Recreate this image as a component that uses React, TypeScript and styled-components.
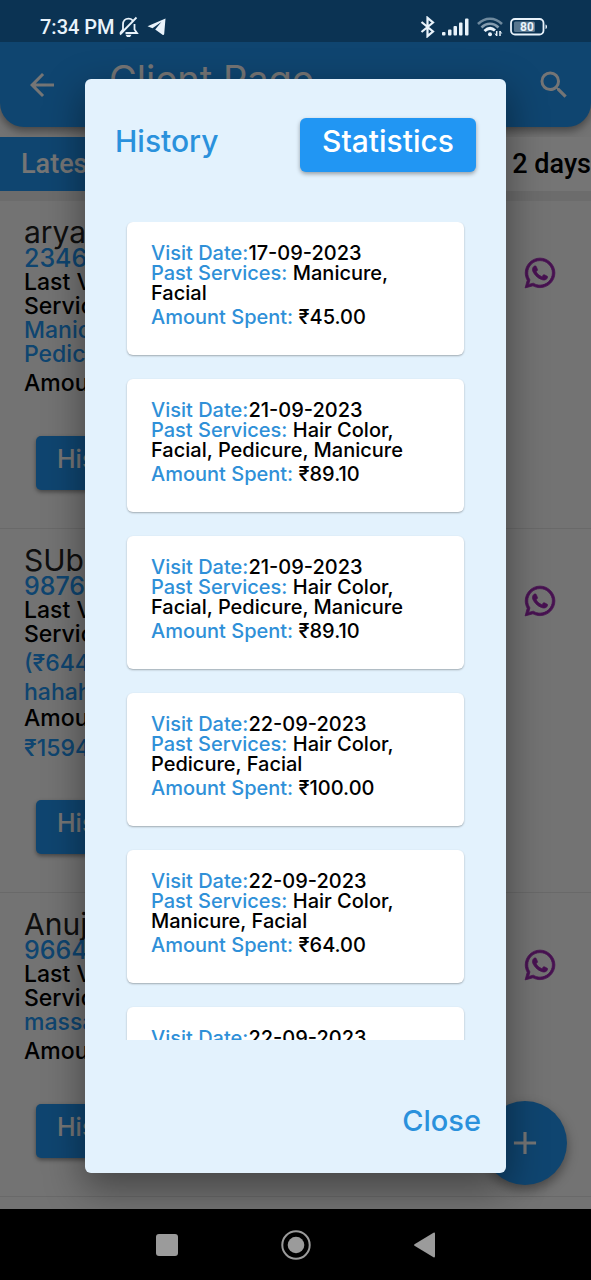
import React from "react";
import styled, { createGlobalStyle } from "styled-components";
import { FaWhatsapp } from "react-icons/fa";
import { MdAdd, MdArrowBack, MdSearch } from "react-icons/md";

const GlobalStyle = createGlobalStyle`
  * { box-sizing: border-box; }
  body { margin: 0; background: #000; }
  button { border: 0; background: none; padding: 0; font: inherit; color: inherit; cursor: pointer; }
  p, h1, h2, ul { margin: 0; padding: 0; font-weight: inherit; font-size: inherit; }
`;

const brand = "#2196f3";

const Screen = styled.div`
  display: flex;
  flex-direction: column;
  height: 100vh;
  font-family: Inter, "Noto Sans", sans-serif;
  font-weight: 500;
  color: #000;
`;

const Page = styled.div`
  position: relative;
  flex: 1;
  min-height: 0;
  overflow: hidden;
  background: #fafafa;
`;

const StatusBar = styled.div`
  position: absolute;
  inset: 0 0 auto 0;
  z-index: 3;
  display: flex;
  align-items: center;
  justify-content: space-between;
  height: 42px;
  padding: 12px 43px 0 40px;
  background: rgba(0, 0, 0, 0.26);
  color: #e9f3fb;
  font: 500 20px/28px Roboto, sans-serif;
`;

const StatusGroup = styled.div<{ $gap: number }>`
  display: flex;
  align-items: center;
  gap: ${(p) => p.$gap}px;
`;

const AppBar = styled.header`
  display: flex;
  align-items: center;
  gap: 49px;
  height: 127px;
  padding: 42px 19px 0 24px;
  border-radius: 0 0 24px 24px;
  background: ${brand};
  color: #fff;
  box-shadow: 0 4px 8px rgba(0, 0, 0, 0.4);
`;

const Title = styled.h1`
  flex: 1;
  padding-bottom: 12px;
  font-size: 38px;
  font-weight: 400;
  line-height: 44px;
`;

const IconButton = styled.button`
  display: flex;
  font-size: 36px;
`;

const Tabs = styled.nav`
  display: flex;
  justify-content: space-between;
  margin-top: 10px;
  height: 54px;
  background: #fff;
  font-family: Roboto, sans-serif;
  font-size: 27px;
`;

const Tab = styled.button<{ $active?: boolean }>`
  padding: ${(p) => (p.$active ? "0 21px" : "0")};
  background: ${(p) => (p.$active ? brand : "transparent")};
  color: ${(p) => (p.$active ? "#fff" : "#000")};
`;

const Clients = styled.ul`
  list-style: none;
  border-top: 10px solid #ececec;
`;

const Client = styled.li`
  display: flex;
  justify-content: space-between;
  padding: 17px 34px 38px 24px;
  border-bottom: 1px solid #e4e4e4;
`;

const ClientName = styled.h2`
  font-size: 30px;
  font-weight: 400;
  line-height: 28px;
  color: #222;
`;

const Line = styled.p<{ $height?: number; $accent?: boolean; $size?: number }>`
  font-size: ${(p) => p.$size ?? 23}px;
  line-height: ${(p) => p.$height ?? 24}px;
  color: ${(p) => (p.$accent ? brand : "#000")};
`;

const HistoryButton = styled.button`
  margin: 36px 0 0 12px;
  height: 54px;
  padding: 0 21px 8px;
  border-radius: 5px;
  background: ${brand};
  color: #fff;
  font-size: 25px;
  box-shadow: 0 2px 4px rgba(0, 0, 0, 0.4);
`;

const ChatButton = styled.button`
  display: flex;
  align-self: flex-start;
  margin-top: 38px;
  font-size: 34px;
  color: #9c27b0;

  svg {
    stroke: currentColor;
    stroke-width: 12;
  }
`;

const Fab = styled.button`
  position: absolute;
  right: 24px;
  bottom: 24px;
  display: grid;
  place-items: center;
  width: 84px;
  height: 84px;
  border-radius: 50%;
  background: ${brand};
  color: #fff;
  font-size: 38px;
  box-shadow: 0 5px 12px rgba(0, 0, 0, 0.4);
`;

const Scrim = styled.div`
  position: absolute;
  inset: 0;
  z-index: 2;
  display: flex;
  padding: 79px 85px 36px;
  background: rgba(0, 0, 0, 0.54);
`;

const Dialog = styled.section`
  flex: 1;
  min-width: 0;
  display: flex;
  flex-direction: column;
  border-radius: 6px;
  background: #e3f2fd;
  box-shadow: 0 14px 38px 2px rgba(0, 0, 0, 0.4);
`;

const DialogTabs = styled.div`
  display: flex;
  justify-content: space-between;
  padding: 39px 30px 50px;
  font-size: 30px;
  line-height: 34px;
`;

const DialogTab = styled.button<{ $active?: boolean }>`
  height: 54px;
  padding: ${(p) => (p.$active ? "0 22px 8px" : "0 0 8px")};
  border-radius: 6px;
  background: ${(p) => (p.$active ? brand : "transparent")};
  color: ${(p) => (p.$active ? "#fff" : "#2a91dc")};
  box-shadow: ${(p) => (p.$active ? "0 2px 4px rgba(0, 0, 0, 0.35)" : "none")};
`;

const Visits = styled.ul`
  flex: 1;
  min-height: 0;
  display: flex;
  flex-direction: column;
  gap: 24px;
  padding: 0 42px;
  overflow-y: auto;
  scrollbar-width: none;
  list-style: none;
`;

const Visit = styled.li`
  flex: none;
  padding: 21px 24px 24px;
  border-radius: 6px;
  background: #fff;
  font-size: 20px;
  line-height: 20px;
  box-shadow: 0 1px 2px rgba(0, 0, 0, 0.3);
`;

const Amount = styled.p`
  line-height: 28px;
`;

const Label = styled.span`
  color: #2f90d8;
`;

const DialogFooter = styled.footer`
  display: flex;
  justify-content: flex-end;
  align-items: flex-start;
  height: 133px;
  padding: 64px 25px 0;
  color: #2a91dc;
  font-size: 29px;
  line-height: 34px;
`;

const NavBar = styled.nav`
  display: flex;
  justify-content: center;
  align-items: center;
  gap: 99px;
  height: 71px;
  background: #000;
  color: #9b9b9b;

  button { display: flex; }
`;

const visits = [
  ["17-09-2023", "Manicure, Facial", "45.00"],
  ["21-09-2023", "Hair Color, Facial, Pedicure, Manicure", "89.10"],
  ["21-09-2023", "Hair Color, Facial, Pedicure, Manicure", "89.10"],
  ["22-09-2023", "Hair Color, Pedicure, Facial", "100.00"],
  ["22-09-2023", "Hair Color, Manicure, Facial", "64.00"],
  ["22-09-2023", "Hair Color, Facial", "64.00"],
];

type Detail = { text: string; accent?: boolean; height?: number };

const clients: { name: string; phone: string; details: Detail[] }[] = [
  {
    name: "arya",
    phone: "2346",
    details: [
      { text: "Manicure,", accent: true },
      { text: "Pedicure", accent: true },
      { text: "Amount", height: 34 },
    ],
  },
  {
    name: "SUbh",
    phone: "9876",
    details: [
      { text: "(₹644)", accent: true, height: 34 },
      { text: "hahah", accent: true },
      { text: "Amount", height: 28 },
      { text: "₹1594", accent: true, height: 32 },
    ],
  },
  {
    name: "Anuj",
    phone: "9664",
    details: [
      { text: "massage", accent: true },
      { text: "Amount", height: 34 },
    ],
  },
];

const BellOff = () => (
  <svg width="20" height="22" viewBox="0 0 20 22" fill="none" stroke="currentColor" strokeWidth="1.800">
    <path d="M4 13.500V8.500C4 5 6.300 2.600 9.500 2.600 11.200 2.600 12.600 3.200 13.600 4.300M15.500 8V13.500L18 17H6.500M1 18.500 17.500 1.500M4 13.500 1.200 17" />
    <path d="M6.500 18.800H12.500L11 21H8Z" fill="currentColor" stroke="none" />
  </svg>
);

const PaperPlane = () => (
  <svg width="19" height="18" viewBox="0 0 19 18" fill="currentColor">
    <path d="M18.500 0.500 0.500 8.200 5.500 10.300 14.300 4 8.200 11.600 15.500 16.800C16.300 17.300 17 17 17.200 16Z" />
  </svg>
);

const Bluetooth = () => (
  <svg width="15" height="22" viewBox="0 0 15 22" fill="none" stroke="currentColor" strokeWidth="2.200">
    <path d="M1.500 6 13 15.500 7.500 20.200V1.800L13 6.500 1.500 16" />
  </svg>
);

const Signal = () => (
  <svg width="28" height="18" viewBox="0 0 28 18" fill="currentColor">
    <rect x="0" y="14" width="3.500" height="3.500" rx="1" />
    <rect x="6" y="11.500" width="3.500" height="6" rx="1" />
    <rect x="11.500" y="8" width="3.500" height="9.500" rx="1" />
    <rect x="17" y="4.500" width="3.500" height="13" rx="1" />
    <rect x="23" y="0.500" width="3.500" height="17" rx="1" />
  </svg>
);

const Wifi = () => (
  <svg width="26" height="20" viewBox="0 0 26 20" fill="none" stroke="currentColor" strokeWidth="2.600">
    <path d="M1 7C8 0 18 0 25 7" opacity="0.45" />
    <path d="M4.500 10.500C9.500 5.500 16.500 5.500 21.500 10.500" opacity="0.55" />
    <path d="M7.500 14C11 10.800 15 10.800 18 13.500" strokeWidth="3" />
    <circle cx="13" cy="17.200" r="2" fill="currentColor" stroke="none" />
    <path d="M19.700 14V19M23 14V19" strokeWidth="1.500" />
    <path d="M18 16.500 19.700 19M24.700 16.500 23 14" strokeWidth="1" />
  </svg>
);

const Battery = () => (
  <svg width="38" height="18" viewBox="0 0 38 18" fill="none">
    <rect x="1" y="1" width="32.500" height="15.500" rx="4" stroke="currentColor" strokeWidth="1.800" />
    <rect x="4" y="3.500" width="21" height="10.500" rx="1.500" fill="currentColor" opacity="0.35" />
    <path d="M35.500 6.500C37.500 7 37.500 10.500 35.500 11Z" fill="currentColor" />
    <text x="17" y="13" fill="currentColor" textAnchor="middle" fontSize="12" fontWeight="700">80</text>
  </svg>
);

export default function App() {
  return (
    <Screen>
      <GlobalStyle />
      <Page>
        <StatusBar>
          <StatusGroup $gap={8}>
            <StatusGroup $gap={4}>
              <span>7:34 PM</span>
              <BellOff />
            </StatusGroup>
            <PaperPlane />
          </StatusGroup>
          <StatusGroup $gap={7}>
            <Bluetooth />
            <Signal />
            <Wifi />
            <Battery />
          </StatusGroup>
        </StatusBar>

        <AppBar>
          <IconButton aria-label="Back"><MdArrowBack /></IconButton>
          <Title>Client Page</Title>
          <IconButton aria-label="Search"><MdSearch /></IconButton>
        </AppBar>
        <Tabs>
          <Tab $active>Latest</Tab>
          <Tab>2 days</Tab>
        </Tabs>
        <Clients>
          {clients.map((client) => (
            <Client key={client.name}>
              <div>
                <ClientName>{client.name}</ClientName>
                <Line $accent $size={25}>{client.phone}</Line>
                <Line>Last Visit</Line>
                <Line>Services</Line>
                {client.details.map((d) => (
                  <Line key={d.text} $accent={d.accent} $height={d.height}>{d.text}</Line>
                ))}
                <HistoryButton>History</HistoryButton>
              </div>
              <ChatButton aria-label="WhatsApp"><FaWhatsapp /></ChatButton>
            </Client>
          ))}
        </Clients>
        <Fab aria-label="Add client"><MdAdd /></Fab>

        <Scrim>
          <Dialog role="dialog" aria-label="Client visits">
            <DialogTabs>
              <DialogTab>History</DialogTab>
              <DialogTab $active>Statistics</DialogTab>
            </DialogTabs>
            <Visits>
              {visits.map(([date, services, amount], i) => (
                <Visit key={i}>
                  <p><Label>Visit Date:</Label>{date}</p>
                  <p><Label>Past Services:</Label> {services}</p>
                  <Amount><Label>Amount Spent:</Label> ₹{amount}</Amount>
                </Visit>
              ))}
            </Visits>
            <DialogFooter>
              <button>Close</button>
            </DialogFooter>
          </Dialog>
        </Scrim>
      </Page>

      <NavBar>
        <button aria-label="Recent apps">
          <svg width="30" height="30" viewBox="0 0 30 30" fill="currentColor"><rect x="4" y="4" width="22" height="22" rx="3" /></svg>
        </button>
        <button aria-label="Home">
          <svg width="30" height="30" viewBox="0 0 30 30">
            <circle cx="15" cy="15" r="13.700" fill="none" stroke="currentColor" strokeWidth="2" />
            <circle cx="15" cy="15" r="8.300" fill="currentColor" />
          </svg>
        </button>
        <button aria-label="Back">
          <svg width="30" height="30" viewBox="0 0 30 30" fill="currentColor"><path d="M4.500 14.200 23.500 2.800Q25 2 25 4V26Q25 28 23.500 27.200L4.500 15.800Q3.500 15 4.500 14.200Z" /></svg>
        </button>
      </NavBar>
    </Screen>
  );
}
